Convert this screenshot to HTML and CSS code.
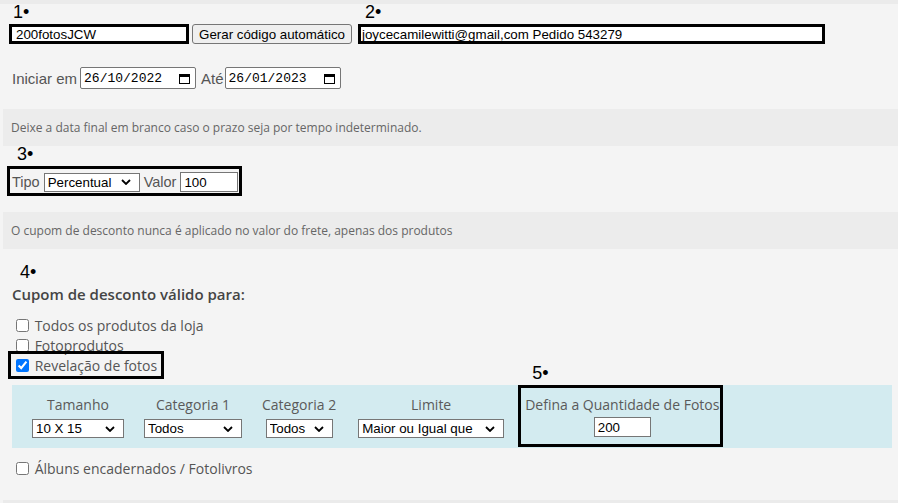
FILE: index.html
```html
<!DOCTYPE html>
<html lang="pt-BR">
<head>
  <meta charset="UTF-8" />
  <meta name="viewport" content="width=device-width, initial-scale=1.0"/>
  <title>Cupom de desconto</title>
  <link rel="stylesheet" href="styles.css">
</head>
<body>
  <div class="topbar"></div>

  <div class="panel">
    <div class="section">
      <div class="codes">
        <div class="field field-code">
          <span class="mark">1•</span>
          <input class="ann-input" type="text" value="200fotosJCW" />
        </div>
        <button class="btn">Gerar código automático</button>
        <div class="field field-email">
          <span class="mark">2•</span>
          <input class="ann-input" type="text" value="joycecamilewitti@gmail,com Pedido 543279" />
        </div>
      </div>

      <div class="dates">
        <span>Iniciar em</span>
        <div class="date">
          <input type="text" value="26/10/2022" />
          <svg width="11" height="11" viewBox="0 0 11 11"><rect x="0.5" y="1.5" width="10" height="9" fill="none" stroke="#000"/><rect x="0" y="1" width="11" height="3" fill="#000"/></svg>
        </div>
        <span class="ate">Até</span>
        <div class="date date-end">
          <input type="text" value="26/01/2023" />
          <svg width="11" height="11" viewBox="0 0 11 11"><rect x="0.5" y="1.5" width="10" height="9" fill="none" stroke="#000"/><rect x="0" y="1" width="11" height="3" fill="#000"/></svg>
        </div>
      </div>
    </div>

    <div class="note">Deixe a data final em branco caso o prazo seja por tempo indeterminado.</div>

    <div class="section">
      <span class="mark mark-3">3•</span>
      <div class="type-box">
        <span>Tipo</span>
        <select class="sel sel-type"><option>Percentual</option><option>Valor fixo</option></select>
        <span class="valor">Valor</span>
        <input class="num num-value" type="text" value="100" />
      </div>
    </div>

    <div class="note note-2">O cupom de desconto nunca é aplicado no valor do frete, apenas dos produtos</div>

    <div class="section">
      <span class="mark mark-4">4•</span>
      <h3 class="heading">Cupom de desconto válido para:</h3>

      <div class="checks">
        <label class="check"><input type="checkbox" /> Todos os produtos da loja</label>
        <label class="check"><input type="checkbox" /> Fotoprodutos</label>
        <label class="check check-ann"><input type="checkbox" checked /> Revelação de fotos</label>
      </div>

      <div class="sizes">
        <div class="col">
          <div class="col-label">Tamanho</div>
          <select class="sel sel-size"><option>10 X 15</option><option>13 X 18</option></select>
        </div>
        <div class="col">
          <div class="col-label">Categoria 1</div>
          <select class="sel sel-cat1"><option>Todos</option></select>
        </div>
        <div class="col">
          <div class="col-label">Categoria 2</div>
          <select class="sel sel-cat2"><option>Todos</option></select>
        </div>
        <div class="col col-limit">
          <div class="col-label">Limite</div>
          <select class="sel sel-limit"><option>Maior ou Igual que</option><option>Menor que</option></select>
        </div>
        <div class="col col-qty">
          <span class="mark mark-5">5•</span>
          <div class="col-label">Defina a Quantidade de Fotos</div>
          <input class="num num-qty" type="text" value="200" />
        </div>
      </div>

      <label class="check check-albums"><input type="checkbox" /> Álbuns encadernados / Fotolivros</label>
    </div>
  </div>
</body>
</html>
```
FILE: styles.css
```css
body { margin: 0; background: #f4f4f4; font-family: "Open Sans", sans-serif; color: #555; }
.topbar { height: 4px; background: #ebebeb; }
.panel { margin-left: 3px; padding-bottom: 22px; border-bottom: 3px solid #ebebeb; }
.section { padding: 0 6px 0 9px; }

/* numbered annotation marks */
.mark { display: block; font-family: "Liberation Sans", Arial, sans-serif; font-size: 18px; line-height: 17px; color: #000; }

.codes { display: flex; align-items: flex-end; }
.field { display: flex; flex-direction: column; }
.field .mark { margin-bottom: 3px; }
.field-code { margin-left: -3px; }
.field-code .mark { padding-left: 4px; }
.field-email { margin-left: 6px; }
.field-email .mark { padding-left: 7px; }
.ann-input { box-sizing: border-box; height: 20px; border: 3px solid #000; padding: 0 0 0 4px; background: #fff; color: #000; font: 13.33px "Liberation Sans", Arial, sans-serif; outline: none; }
.field-code .ann-input { width: 180px; }
.field-email .ann-input { width: 467px; padding-left: 1px; }
.btn { box-sizing: border-box; margin-left: 3px; width: 160px; height: 20px; padding: 0; background: #efefef; border: 1px solid #767676; border-radius: 3px; color: #000; font: 13.33px "Liberation Sans", Arial, sans-serif; }

.dates { display: flex; align-items: center; margin-top: 23px; font: 15px "Liberation Sans", Arial, sans-serif; color: #555; }
.date { display: flex; align-items: center; box-sizing: border-box; width: 116px; height: 22px; margin-left: 3px; padding: 0 5px 0 3px; background: #fff; border: 1px solid #767676; border-radius: 2px; }
.date input { width: 90px; padding: 0; border: 0; background: transparent; color: #000; font: 13px "Liberation Mono", monospace; outline: none; }
.date svg { margin-left: auto; }
.ate { margin-left: 5px; }
.date-end { margin-left: 1px; }

.note { margin-top: 20px; height: 37px; line-height: 37px; padding-left: 8px; background: #ececec; font-size: 12px; color: #666; }
.note-2 { margin-top: 16px; }

.mark-3 { padding-left: 5px; margin-bottom: 3px; }
.type-box { display: flex; align-items: center; width: fit-content; margin-left: -5px; padding: 3px 1px 1px 2px; border: 3px solid #000; font: 14.5px "Liberation Sans", Arial, sans-serif; color: #555; }
.sel { box-sizing: border-box; height: 19px; padding: 0 20px 0 3px; background: #fff url("data:image/svg+xml,%3Csvg xmlns='http://www.w3.org/2000/svg' width='10' height='6' viewBox='0 0 10 6'%3E%3Cpolyline points='1,1 5,5 9,1' fill='none' stroke='%23000' stroke-width='1.8'/%3E%3C/svg%3E") no-repeat right 8px center; border: 1px solid #767676; border-radius: 0; color: #000; font: 13.33px "Liberation Sans", Arial, sans-serif; -webkit-appearance: none; appearance: none; }
.sel-type { width: 96px; margin: 0 4px; }
.num { box-sizing: border-box; height: 20px; padding: 0 3px; background: #fff; border: 1px solid #767676; color: #000; font: 13.33px "Liberation Sans", Arial, sans-serif; }
.num-value { width: 58px; margin-left: 4px; }

.mark-4 { margin-top: 15px; padding-left: 8px; }
.heading { margin: 3px 0 0; font-size: 15px; line-height: 20px; font-weight: 600; color: #444; }

.checks { margin-top: 11px; }
.check { display: flex; align-items: center; height: 20px; font-size: 14px; color: #555; white-space: pre; }
.check input { width: 13px; height: 13px; margin: 0 2px 0 4px; }
.check-ann { width: fit-content; padding-right: 3px; outline: 3px solid #000; outline-offset: 1px; }

.sizes { display: flex; align-items: flex-start; margin-top: 10px; padding: 0 10px; background: #d3ebf0; }
.col { display: flex; flex-direction: column; align-items: center; padding: 10px; }
.col-label { line-height: 20px; font-size: 14px; color: #5a5a5a; white-space: nowrap; }
.col .sel { margin-top: 4px; }
.col-limit { padding-left: 12px; }
.sel-size { width: 92px; }
.sel-cat1 { width: 98px; }
.sel-cat2 { width: 67px; }
.sel-limit { width: 146px; }
.col-qty { position: relative; margin-left: 4px; padding: 7px 1px 7px 4px; border: 3px solid #000; }
.mark-5 { position: absolute; left: 11px; top: -23px; }
.num-qty { width: 57px; margin-top: 2px; }

.check-albums { margin-top: 10px; }
```
